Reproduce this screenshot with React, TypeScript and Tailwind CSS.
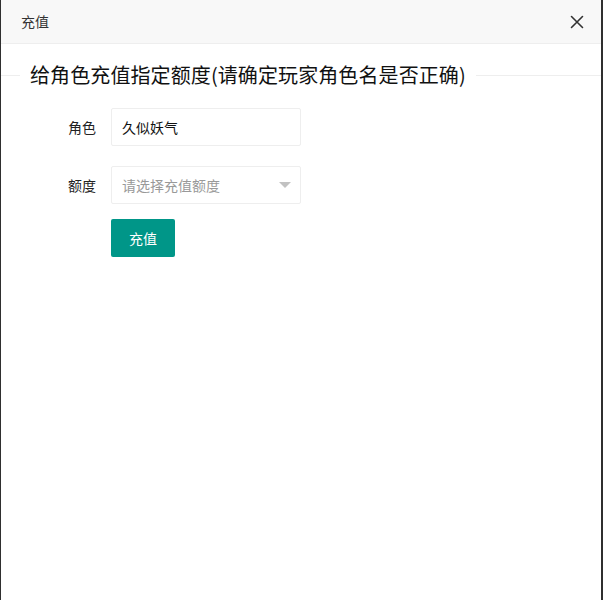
import React from 'react';

const font = { fontFamily: '"Microsoft YaHei", "Noto Sans CJK SC", "Noto Sans", sans-serif' };

export default function App() {
  return (
    <div
      className="w-[603px] h-[600px] bg-white border-l border-l-[#2f2f2f] border-r-2 border-r-[#2f2f2f] flex flex-col overflow-hidden"
      style={font}
    >
      {/* title bar */}
      <div className="h-[44px] shrink-0 bg-[#f8f8f8] border-b border-[#eeeeee] flex items-center justify-between pl-[20px] pr-[17px]">
        <span className="text-[14px] text-[#333]">充值</span>
        <svg width="14" height="14" viewBox="0 0 14 14" className="text-[#333]">
          <path d="M1.5 1.5 L12.5 12.5 M12.5 1.5 L1.5 12.5" stroke="currentColor" strokeWidth="1.6" strokeLinecap="round" />
        </svg>
      </div>

      {/* fieldset title */}
      <div className="mt-[12px] h-[38px] flex items-center">
        <div className="w-[19px] h-px bg-[#eeeeee]" />
        <span className="px-[10px] text-[20px] font-normal text-[#111] leading-none tracking-[0.1px]">
          给角色充值指定额度(请确定玩家角色名是否正确)
        </span>
        <div className="flex-1 h-px bg-[#eeeeee]" />
      </div>

      {/* form */}
      <div className="mt-[14px] flex flex-col">
        <div className="flex items-center">
          <label className="w-[95px] text-right text-[14px] text-[#222]">角色</label>
          <div className="ml-[15px] w-[190px] h-[38px] border border-[#eeeeee] rounded-[2px] flex items-center pl-[10px] text-[14px] text-[#111]">
            久似妖气
          </div>
        </div>
        <div className="mt-[20px] flex items-center">
          <label className="w-[95px] text-right text-[14px] text-[#222]">额度</label>
          <div className="ml-[15px] w-[190px] h-[38px] border border-[#eeeeee] rounded-[2px] flex items-center justify-between pl-[10px] pr-[9px] text-[14px] text-[#999]">
            <span>请选择充值额度</span>
            <span className="w-0 h-0 border-x-[6px] border-x-transparent border-t-[6px] border-t-[#c2c2c2]" />
          </div>
        </div>
        <div className="mt-[15px] pl-[110px]">
          <button className="w-[64px] h-[38px] bg-[#009688] text-white text-[14px] rounded-[2px]">充值</button>
        </div>
      </div>
    </div>
  );
}
